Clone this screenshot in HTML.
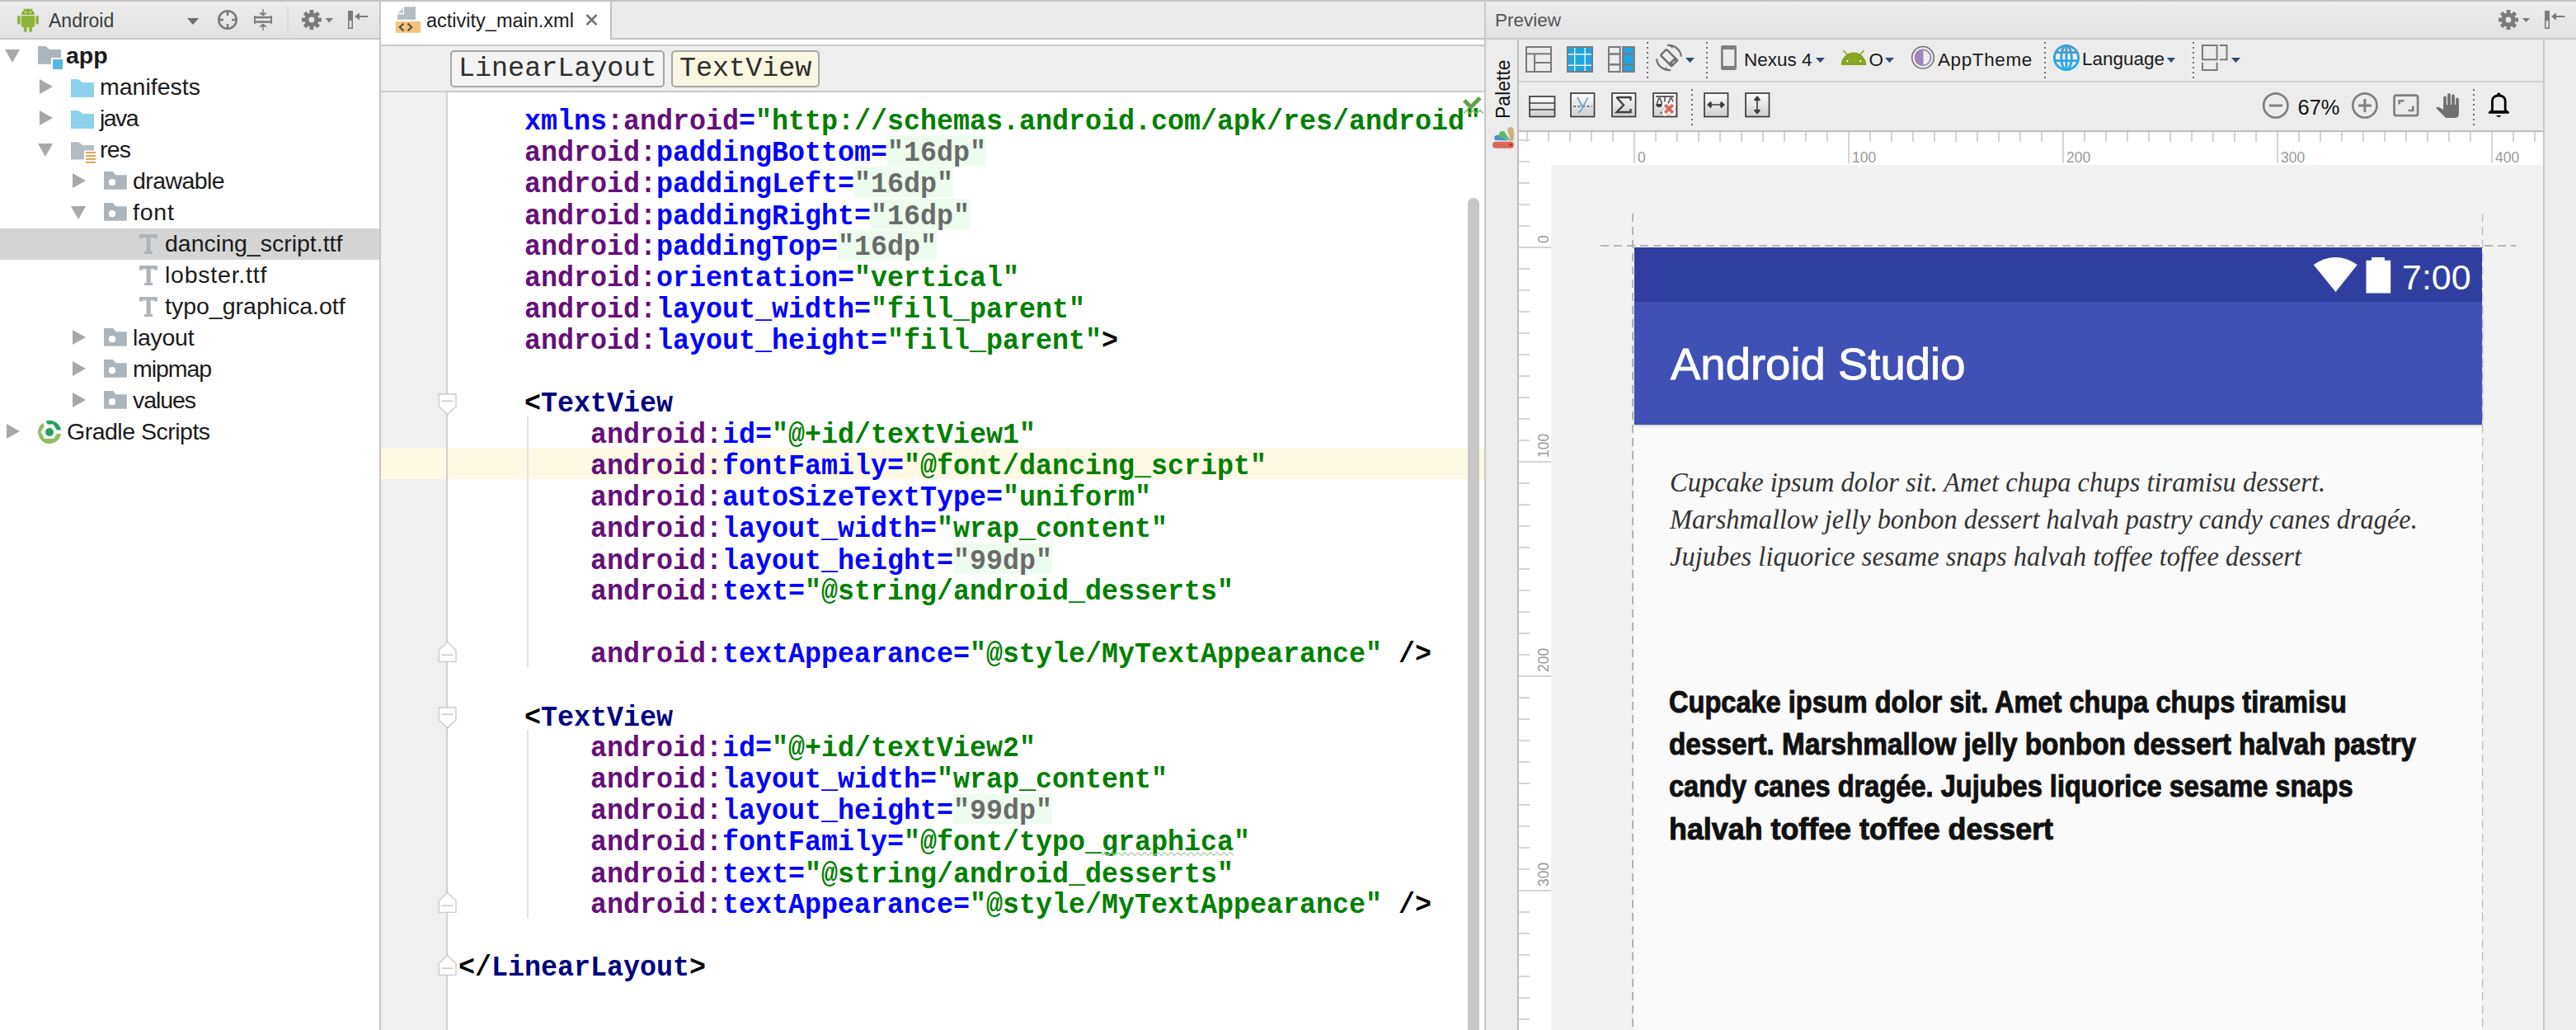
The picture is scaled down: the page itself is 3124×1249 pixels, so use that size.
<!DOCTYPE html>
<html><head><meta charset="utf-8">
<style>
*{margin:0;padding:0;box-sizing:border-box}
html,body{width:3124px;height:1249px;overflow:hidden;background:#fff;position:relative;font-family:"Liberation Sans",sans-serif}
.a{position:absolute}
.hdr{background:linear-gradient(#ececec,#e2e2e2)}
.code{position:absolute;left:556px;top:129px;transform:scaleY(1.08);transform-origin:0 0;font-family:"Liberation Mono",monospace;font-weight:bold;font-size:33.33px;line-height:35.185px;white-space:pre;color:#000}
.n{color:#660e7a}.at{color:#0000ff}.v{color:#008000}.t{color:#000080}.fold{color:#6b6b6b;background:linear-gradient(#edfcee,#edfcee) no-repeat 0 0/100% 34.3px}
.tree{position:absolute;left:0;margin-top:-1px;font-size:28.5px;color:#1b1b1b;white-space:nowrap}
.ruler{background:#fff}
.scr{font-family:"Liberation Serif",serif;font-style:italic;font-size:34px;line-height:44px;color:#333;white-space:nowrap;transform-origin:0 0}
.bt{font-weight:bold;font-size:37px;line-height:44px;color:#111;-webkit-text-stroke:1px #111;white-space:nowrap;transform-origin:0 0}
.rl{font-size:17.5px;line-height:20px;color:#999;white-space:nowrap}
.rot{transform-origin:0 0;transform:rotate(-90deg)}
.tb{font-size:22.5px;line-height:30px;color:#1a1a1a;white-space:nowrap}
</style></head><body>
<!-- top border -->
<div class="a" style="left:0;top:0;width:3124px;height:2px;background:#c4c4c4"></div>

<!-- ============ PROJECT PANEL ============ -->
<div class="a hdr" style="left:0;top:2px;width:460px;height:44px"></div>
<div class="a" style="left:0;top:46px;width:460px;height:2px;background:#c9c9c9"></div>
<div class="a" style="left:460px;top:0;width:2px;height:1249px;background:#c6c6c6"></div>
<!-- selected row -->
<div class="a" style="left:0;top:277px;width:460px;height:38px;background:#d5d5d5"></div>


<!-- header content -->
<svg class="a" style="left:0;top:0" width="460" height="47" viewBox="0 0 460 47">
 <g fill="#8db33b">
  <path d="M25.8 18 A8.15 7.6 0 0 1 42.1 18 Z"/>
  <rect x="25.8" y="19.1" width="16.3" height="12" />
  <path d="M25.8 30 H42.1 V31 Q42.1 33 40 33 H27.8 Q25.8 33 25.8 31 Z"/>
  <rect x="21" y="18.9" width="3.7" height="10.9" rx="1.85"/>
  <rect x="43.3" y="18.9" width="3.7" height="10.9" rx="1.85"/>
  <rect x="28.9" y="30" width="3.9" height="9" rx="1.9"/>
  <rect x="35.1" y="30" width="3.9" height="9" rx="1.9"/>
  <path d="M28.3 9.3 L30.3 12" stroke="#8db33b" stroke-width="1"/>
  <path d="M39.6 9.3 L37.6 12" stroke="#8db33b" stroke-width="1"/>
 </g>
 <rect x="30.3" y="14" width="1.8" height="1.8" fill="#e6e6e6"/>
 <rect x="36.3" y="14" width="1.8" height="1.8" fill="#e6e6e6"/>
 <path d="M227 22 H241 L234 30 Z" fill="#6e6e6e"/>
 <circle cx="276" cy="24" r="10.7" fill="none" stroke="#7b7b7b" stroke-width="2.6"/>
 <rect x="274.7" y="12" width="2.6" height="7" fill="#7b7b7b"/>
 <rect x="274.7" y="29" width="2.6" height="7" fill="#7b7b7b"/>
 <rect x="264" y="22.7" width="7" height="2.6" fill="#7b7b7b"/>
 <rect x="281" y="22.7" width="7" height="2.6" fill="#7b7b7b"/>
 <g fill="#7b7b7b">
  <rect x="308" y="19.8" width="22" height="2.5"/><rect x="308" y="25.3" width="22" height="2.5"/>
  <rect x="308" y="19" width="1.8" height="9.8"/><rect x="328.2" y="19" width="1.8" height="9.8"/>
  <rect x="318.3" y="11" width="1.4" height="6"/><path d="M314 15.5 H324 L319 19.5Z"/>
  <rect x="318.3" y="31" width="1.4" height="6"/><path d="M314 32.5 H324 L319 28.5Z"/>
 </g>
 <rect x="348.5" y="7" width="1.2" height="33" fill="#d2d2d2"/>
 <g fill="#7b7b7b"><circle cx="377.9" cy="24" r="8.6"/><rect x="375.5" y="12.0" width="4.8" height="6" transform="rotate(0 377.9 24)"/><rect x="375.5" y="12.0" width="4.8" height="6" transform="rotate(45 377.9 24)"/><rect x="375.5" y="12.0" width="4.8" height="6" transform="rotate(90 377.9 24)"/><rect x="375.5" y="12.0" width="4.8" height="6" transform="rotate(135 377.9 24)"/><rect x="375.5" y="12.0" width="4.8" height="6" transform="rotate(180 377.9 24)"/><rect x="375.5" y="12.0" width="4.8" height="6" transform="rotate(225 377.9 24)"/><rect x="375.5" y="12.0" width="4.8" height="6" transform="rotate(270 377.9 24)"/><rect x="375.5" y="12.0" width="4.8" height="6" transform="rotate(315 377.9 24)"/></g><circle cx="377.9" cy="24" r="3.4" fill="#e6e6e6"/>
 <path d="M394.5 22 H404 L399.2 27.5Z" fill="#7b7b7b"/>
 <rect x="422" y="13" width="6" height="22" fill="#7b7b7b"/>
 <rect x="423.6" y="25" width="2.8" height="8.5" fill="#e6e6e6"/>
 <path d="M430 20 L436 15.5 V18.9 H446 V21.1 H436 V24.5Z" fill="#7b7b7b"/>
</svg>
<div class="a" style="left:59px;top:10px;font-size:23px;line-height:30px;color:#3c3c3c">Android</div>

<!-- tree icons -->
<svg class="a" style="left:0;top:49px" width="460" height="500" viewBox="0 49 460 500">
 <g fill="#a8a8a8">
  <path d="M6 60 H24 L15 76Z"/>
  <path d="M48 96 V114 L64 105Z"/>
  <path d="M48 134 V152 L64 143Z"/>
  <path d="M46 174 H64 L55 190Z"/>
  <path d="M88 210 V228 L104 219Z"/>
  <path d="M86 250 H104 L95 266Z"/>
  <path d="M88 400 V418 L104 409Z"/>
  <path d="M88 438 V456 L104 447Z"/>
  <path d="M88 476 V494 L104 485Z"/>
  <path d="M8 514 V532 L24 523Z"/>
 </g>
 <!-- app folder -->
 <path d="M46 56 H55.3 L60.2 60.1 H74 V70 H62 V77.7 H46Z" fill="#adb5bc"/>
 <rect x="64" y="72" width="12" height="12" fill="#57b9e0"/>
 <!-- manifests, java -->
 <path d="M86 96 H95 L100 100 H114 V118 H86Z" fill="#8fd1ea"/>
 <path d="M86 134 H95 L100 138 H114 V156 H86Z" fill="#8fd1ea"/>
 <!-- res -->
 <path d="M86 172.2 H95 L100.4 176 H113.8 V182.5 H102 V193.5 H86Z" fill="#b4bcc3"/>
 <g fill="#d99a35"><rect x="104" y="184.2" width="12" height="1.7"/><rect x="104" y="188.2" width="12" height="1.7"/><rect x="104" y="192.1" width="12" height="1.7"/><rect x="104" y="196" width="12" height="1.7"/></g>
 <!-- gray folders with circle -->
 <g fill="#adb5bc">
  <path d="M126 208 H137 L140.6 212.2 H153.8 V229.7 H126Z"/>
  <path d="M126 246 H137 L140.6 250.2 H153.8 V267.7 H126Z"/>
  <path d="M126 398 H137 L140.6 402.2 H153.8 V419.7 H126Z"/>
  <path d="M126 436 H137 L140.6 440.2 H153.8 V457.7 H126Z"/>
  <path d="M126 474 H137 L140.6 478.2 H153.8 V495.7 H126Z"/>
 </g>
 <g fill="#fff">
  <circle cx="136" cy="221.2" r="4.1"/><circle cx="136" cy="259.2" r="4.1"/><circle cx="136" cy="411.2" r="4.1"/><circle cx="136" cy="449.2" r="4.1"/><circle cx="136" cy="487.2" r="4.1"/>
 </g>
 <!-- T icons -->
 <g fill="#adb5bc">
  <path d="M169 284 H191 V289.6 H187 V288.2 H182.7 V305 H185 V308 H175 V305 H177.5 V288.2 H173 V289.6 H169Z"/>
  <path d="M169 322 H191 V327.6 H187 V326.2 H182.7 V343 H185 V346 H175 V343 H177.5 V326.2 H173 V327.6 H169Z"/>
  <path d="M169 360 H191 V365.6 H187 V364.2 H182.7 V381 H185 V384 H175 V381 H177.5 V364.2 H173 V365.6 H169Z"/>
 </g>
 <!-- gradle -->
 <path d="M56 510.5 A14 14 0 0 1 74 521.5 L69 521.5 L64.5 514.5 L57.5 514.5Z" fill="#21a05a"/>
 <path d="M51.5 513 L54 516 L49.5 524 L54 532 L65 532 L69 526 L74 526 A14 14 0 1 1 51.5 513Z" fill="#8fbf5f"/>
 <circle cx="60" cy="524" r="4.9" fill="#21a05a"/>
</svg>
<div class="tree" style="top:49px;left:80px;font-weight:bold;line-height:38px">app</div>
<div class="tree" style="top:87px;left:121px;line-height:38px">manifests</div>
<div class="tree" style="top:125px;left:121px;line-height:38px;letter-spacing:-1.6px">java</div>
<div class="tree" style="top:163px;left:121px;line-height:38px;letter-spacing:-0.8px">res</div>
<div class="tree" style="top:201px;left:161px;line-height:38px;letter-spacing:-0.57px">drawable</div>
<div class="tree" style="top:239px;left:161px;line-height:38px;letter-spacing:0.77px">font</div>
<div class="tree" style="top:277px;left:200px;line-height:38px">dancing_script.ttf</div>
<div class="tree" style="top:315px;left:200px;line-height:38px;letter-spacing:0.77px">lobster.ttf</div>
<div class="tree" style="top:353px;left:200px;line-height:38px">typo_graphica.otf</div>
<div class="tree" style="top:391px;left:161px;line-height:38px;letter-spacing:-0.3px">layout</div>
<div class="tree" style="top:429px;left:161px;line-height:38px;letter-spacing:-1.04px">mipmap</div>
<div class="tree" style="top:467px;left:161px;line-height:38px;letter-spacing:-1.1px">values</div>
<div class="tree" style="top:505px;left:81px;line-height:38px;letter-spacing:-0.5px">Gradle Scripts</div>

<!-- ============ EDITOR ============ -->
<div class="a" style="left:742px;top:2px;width:1058px;height:44px;background:#ebebeb"></div>
<div class="a" style="left:740px;top:2px;width:2px;height:46px;background:#c0c0c0"></div>
<div class="a" style="left:742px;top:46px;width:1058px;height:2px;background:#c0c0c0"></div>
<div class="a" style="left:462px;top:54px;width:1338px;height:2px;background:#c8c8c8"></div>
<div class="a" style="left:462px;top:56px;width:1338px;height:54px;background:#efefef"></div>
<div class="a" style="left:462px;top:110px;width:1338px;height:2px;background:#cdcdcd"></div>
<!-- gutter -->
<div class="a" style="left:462px;top:112px;width:79px;height:1137px;background:#f0f0f0"></div>
<!-- caret row -->
<div class="a" style="left:462px;top:543px;width:1338px;height:38px;background:#fdf9e5"></div>
<div class="a" style="left:541px;top:112px;width:2px;height:1137px;background:#d0d0d0"></div>
<div class="a" style="left:1800px;top:0;width:2px;height:1249px;background:#c9c9c9"></div>

<div class="code">    <span class="at">xmlns</span><span class="n">:android</span><span class="at">=</span><span class="v">"http://schemas.android.com/apk/res/android"</span>
    <span class="n">android:</span><span class="at">paddingBottom=</span><span class="fold">"16dp"</span>
    <span class="n">android:</span><span class="at">paddingLeft=</span><span class="fold">"16dp"</span>
    <span class="n">android:</span><span class="at">paddingRight=</span><span class="fold">"16dp"</span>
    <span class="n">android:</span><span class="at">paddingTop=</span><span class="fold">"16dp"</span>
    <span class="n">android:</span><span class="at">orientation=</span><span class="v">"vertical"</span>
    <span class="n">android:</span><span class="at">layout_width=</span><span class="v">"fill_parent"</span>
    <span class="n">android:</span><span class="at">layout_height=</span><span class="v">"fill_parent"</span>&gt;

    &lt;<span class="t">TextView</span>
        <span class="n">android:</span><span class="at">id=</span><span class="v">"@+id/textView1"</span>
        <span class="n">android:</span><span class="at">fontFamily=</span><span class="v">"@font/dancing_script"</span>
        <span class="n">android:</span><span class="at">autoSizeTextType=</span><span class="v">"uniform"</span>
        <span class="n">android:</span><span class="at">layout_width=</span><span class="v">"wrap_content"</span>
        <span class="n">android:</span><span class="at">layout_height=</span><span class="fold">"99dp"</span>
        <span class="n">android:</span><span class="at">text=</span><span class="v">"@string/android_desserts"</span>

        <span class="n">android:</span><span class="at">textAppearance=</span><span class="v">"@style/MyTextAppearance"</span> /&gt;

    &lt;<span class="t">TextView</span>
        <span class="n">android:</span><span class="at">id=</span><span class="v">"@+id/textView2"</span>
        <span class="n">android:</span><span class="at">layout_width=</span><span class="v">"wrap_content"</span>
        <span class="n">android:</span><span class="at">layout_height=</span><span class="fold">"99dp"</span>
        <span class="n">android:</span><span class="at">fontFamily=</span><span class="v">"@font/typo_graphica"</span>
        <span class="n">android:</span><span class="at">text=</span><span class="v">"@string/android_desserts"</span>
        <span class="n">android:</span><span class="at">textAppearance=</span><span class="v">"@style/MyTextAppearance"</span> /&gt;

&lt;/<span class="t">LinearLayout</span>&gt;</div>


<!-- tab content -->
<svg class="a" style="left:462px;top:0" width="340" height="54" viewBox="462 0 340 54">
 <path d="M490 8.2 H504 V23.7 H482 V17.5 H490Z" fill="#b3bcc4"/>
 <path d="M482.5 16 L489 9.2 V16Z" fill="#c3cad0"/>
 <rect x="480" y="26" width="30" height="13.7" fill="#f4c27d"/>
 <path d="M489.5 28.5 L484.8 33 L489.5 37.5 M494.5 28.5 L499.2 33 L494.5 37.5" fill="none" stroke="#5b5040" stroke-width="2.2"/>
 <path d="M711.5 18 L723.5 30 M723.5 18 L711.5 30" stroke="#757575" stroke-width="2.6"/>
</svg>
<div class="a" style="left:517px;top:9.5px;font-size:23.5px;line-height:30px;color:#1c1c1c">activity_main.xml</div>
<!-- breadcrumbs -->
<div class="a" style="left:546px;top:60.5px;width:260px;height:45px;border:2px solid #a6a6a6;border-radius:5px;background:#f4f4f4"></div>
<div class="a" style="left:814px;top:60.5px;width:180px;height:45px;border:2px solid #a6a6a6;border-radius:5px;background:#f9f6e1"></div>
<div class="a" style="left:556px;top:63px;font-family:'Liberation Mono',monospace;font-size:33.4px;line-height:40px;color:#2e2e2e">LinearLayout</div>
<div class="a" style="left:824px;top:63px;font-family:'Liberation Mono',monospace;font-size:33.4px;line-height:40px;color:#2e2e2e">TextView</div>
<!-- indent guides -->
<div class="a" style="left:639px;top:505px;width:1.5px;height:304px;background:#e2e2e2"></div>
<div class="a" style="left:639px;top:885px;width:1.5px;height:228px;background:#e2e2e2"></div>
<!-- fold markers -->
<svg class="a" style="left:520px;top:112px" width="50" height="1137" viewBox="520 112 50 1137">
 <g fill="#fff" stroke="#c9c9c9" stroke-width="1.3">
  <path d="M532.3 478 H553 V493 L542.6 502.5 L532.3 493Z"/>
  <path d="M532.3 858 H553 V873 L542.6 882.5 L532.3 873Z"/>
  <path d="M532.3 802.4 H553 V788.5 L542.6 778.3 L532.3 788.5Z"/>
  <path d="M532.3 1106.4 H553 V1092.5 L542.6 1082.3 L532.3 1092.5Z"/>
  <path d="M532.3 1182.4 H553 V1168.5 L542.6 1158.3 L532.3 1168.5Z"/>
 </g>
 <g fill="#cbcbcb">
  <rect x="535.5" y="485.5" width="14" height="1.6"/>
  <rect x="535.5" y="865.5" width="14" height="1.6"/>
  <rect x="535.5" y="793.4" width="14" height="1.6"/>
  <rect x="535.5" y="1097.4" width="14" height="1.6"/>
  <rect x="535.5" y="1173.4" width="14" height="1.6"/>
 </g>
</svg>
<svg class="a" style="left:1330px;top:1028px" width="170" height="14" viewBox="1330 1028 170 14"><path d="M1336.3 1037.4 L1340.3 1033.6 L1344.3 1037.4 L1348.3 1033.6 L1352.3 1037.4 L1356.3 1033.6 L1360.3 1037.4 L1364.3 1033.6 L1368.3 1037.4 L1372.3 1033.6 L1376.3 1037.4 L1380.3 1033.6 L1384.3 1037.4 L1388.3 1033.6 L1392.3 1037.4 L1396.3 1033.6 L1400.3 1037.4 L1404.3 1033.6 L1408.3 1037.4 L1412.3 1033.6 L1416.3 1037.4 L1420.3 1033.6 L1424.3 1037.4 L1428.3 1033.6 L1432.3 1037.4 L1436.3 1033.6 L1440.3 1037.4 L1444.3 1033.6 L1448.3 1037.4 L1452.3 1033.6 L1456.3 1037.4 L1460.3 1033.6 L1464.3 1037.4 L1468.3 1033.6 L1472.3 1037.4 L1476.3 1033.6 L1480.3 1037.4 L1484.3 1033.6 L1488.3 1037.4 L1492.3 1033.6 L1496.3 1037.4" fill="none" stroke="#a9cfa2" stroke-width="1.2"/></svg>
<svg class="a" style="left:1770px;top:128px" width="30" height="14" viewBox="1770 128 30 14"><path d="M1775 137.5 L1779.0 133.7 L1783.0 137.5 L1787.0 133.7 L1791.0 137.5 L1795.0 133.7 L1799.0 137.5" fill="none" stroke="#7fb56f" stroke-width="1.3"/></svg>
<!-- check mark -->
<svg class="a" style="left:1765px;top:110px" width="35" height="30" viewBox="1765 110 35 30">
 <path d="M1775.8 121.8 L1783.8 129.8 L1794.8 118.8" fill="none" stroke="#62a04f" stroke-width="5" stroke-linecap="butt"/>
</svg>
<!-- scrollbar -->
<div class="a" style="left:1780px;top:240px;width:14px;height:1010px;border-radius:7px 7px 0 0;background:#c7c7c7"></div>

<!-- ============ PREVIEW ============ -->
<div class="a hdr" style="left:1802px;top:2px;width:1322px;height:45px"></div>
<div class="a" style="left:1802px;top:46px;width:1322px;height:2px;background:#c9c9c9"></div>
<div class="a" style="left:1802px;top:48px;width:38px;height:1201px;background:#ececec"></div>
<div class="a" style="left:1840px;top:48px;width:2px;height:1201px;background:#bdbdbd"></div>
<div class="a" style="left:1842px;top:48px;width:1242px;height:111px;background:#ececec"></div>
<div class="a" style="left:1842px;top:98px;width:1242px;height:2px;background:#cfcfcf"></div>
<div class="a" style="left:1842px;top:158px;width:1242px;height:2px;background:#bcbcbc"></div>
<div class="a" style="left:3084px;top:48px;width:2px;height:1201px;background:#c9c9c9"></div>
<div class="a" style="left:3086px;top:48px;width:38px;height:1201px;background:#ececec"></div>

<div class="a" style="left:1813px;top:10px;font-size:22.5px;line-height:30px;color:#555">Preview</div>
<svg class="a" style="left:3020px;top:0" width="104" height="47" viewBox="3020 0 104 47">
 <g fill="#7b7b7b">
  
  <path d="M3059 22 H3068 L3063.5 27Z"/>
  <rect x="3086" y="13" width="6" height="22"/>
  <path d="M3094 20 L3100 15.5 V18.9 H3110.5 V21.1 H3100 V24.5Z"/>
 </g>
 <g fill="#7b7b7b"><circle cx="3042" cy="24" r="8.6"/><rect x="3039.6" y="12.0" width="4.8" height="6" transform="rotate(0 3042 24)"/><rect x="3039.6" y="12.0" width="4.8" height="6" transform="rotate(45 3042 24)"/><rect x="3039.6" y="12.0" width="4.8" height="6" transform="rotate(90 3042 24)"/><rect x="3039.6" y="12.0" width="4.8" height="6" transform="rotate(135 3042 24)"/><rect x="3039.6" y="12.0" width="4.8" height="6" transform="rotate(180 3042 24)"/><rect x="3039.6" y="12.0" width="4.8" height="6" transform="rotate(225 3042 24)"/><rect x="3039.6" y="12.0" width="4.8" height="6" transform="rotate(270 3042 24)"/><rect x="3039.6" y="12.0" width="4.8" height="6" transform="rotate(315 3042 24)"/></g><circle cx="3042" cy="24" r="3.4" fill="#e6e6e6"/>
 <rect x="3087.6" y="25" width="2.8" height="8.5" fill="#e6e6e6"/>
</svg>
<!-- palette strip -->
<div class="a" style="left:1814px;top:144px;width:72px;height:18px;transform-origin:0 0;transform:rotate(-90deg);font-size:23px;line-height:18px;color:#111;white-space:nowrap">Palette</div>
<svg class="a" style="left:1805px;top:150px" width="35" height="35" viewBox="1805 150 35 35">
 <path d="M1813 170 Q1810 164 1817 163.5 L1829 170.5Z" fill="#4e91c6"/>
 <path d="M1818 165 Q1817 158 1824 159 L1832 171Z" fill="#5cb86a"/>
 <path d="M1828 157 Q1830 152 1835 155 Q1837 162 1835 171 L1832 171Z" fill="#cfae80"/>
 <rect x="1810" y="171.7" width="26" height="8" rx="4" fill="#d9685a"/>
 <circle cx="1832" cy="175.6" r="1.9" fill="#b8352e"/>
</svg>
<!-- toolbar row 1 -->
<svg class="a" style="left:1843px;top:48px" width="1241" height="112" viewBox="1843 48 1241 112">
 <defs><linearGradient id="bg1" x1="0" y1="0" x2="0" y2="1"><stop offset="0" stop-color="#fff"/><stop offset="1" stop-color="#cdcdcd"/></linearGradient>
 <linearGradient id="gl" gradientUnits="userSpaceOnUse" x1="0" y1="54" x2="0" y2="86"><stop offset="0" stop-color="#4b9bc8"/><stop offset="1" stop-color="#1eaaf0"/></linearGradient></defs>
 <g fill="none" stroke="#7a7a7a" stroke-width="2">
  <rect x="1851" y="57" width="30" height="30"/>
  <path d="M1851 65.3 H1881 M1861 65.3 V87 M1861 76 H1881"/>
 </g>
 <rect x="1901" y="57" width="30" height="30" fill="#1ea7e6" stroke="#7a7a7a" stroke-width="2"/>
 <path d="M1909.7 58 V86 M1922.2 58 V86 M1902 65.8 H1930 M1902 79.3 H1930" stroke="#f4f4f4" stroke-width="1.4"/>
 <rect x="1951" y="57" width="13.7" height="30" fill="none" stroke="#7a7a7a" stroke-width="2"/>
 <rect x="1968.1" y="57" width="13.7" height="30" fill="#1ea7e6" stroke="#7a7a7a" stroke-width="2"/>
 <path d="M1951 65.5 H1964.7 M1951 78.3 H1964.7 M1968.1 65.5 H1981.8 M1968.1 78.3 H1981.8" stroke="#7a7a7a" stroke-width="2.4"/>
 <g fill="#6e6e6e"><rect x="1997" y="51" width="2" height="2"/><rect x="1997" y="57" width="2" height="2"/><rect x="1997" y="63" width="2" height="2"/><rect x="1997" y="69" width="2" height="2"/><rect x="1997" y="75" width="2" height="2"/><rect x="1997" y="81" width="2" height="2"/><rect x="1997" y="87" width="2" height="2"/><rect x="1997" y="93" width="2" height="2"/><rect x="2069" y="51" width="2" height="2"/><rect x="2069" y="57" width="2" height="2"/><rect x="2069" y="63" width="2" height="2"/><rect x="2069" y="69" width="2" height="2"/><rect x="2069" y="75" width="2" height="2"/><rect x="2069" y="81" width="2" height="2"/><rect x="2069" y="87" width="2" height="2"/><rect x="2069" y="93" width="2" height="2"/><rect x="2479" y="51" width="2" height="2"/><rect x="2479" y="57" width="2" height="2"/><rect x="2479" y="63" width="2" height="2"/><rect x="2479" y="69" width="2" height="2"/><rect x="2479" y="75" width="2" height="2"/><rect x="2479" y="81" width="2" height="2"/><rect x="2479" y="87" width="2" height="2"/><rect x="2479" y="93" width="2" height="2"/><rect x="2659" y="51" width="2" height="2"/><rect x="2659" y="57" width="2" height="2"/><rect x="2659" y="63" width="2" height="2"/><rect x="2659" y="69" width="2" height="2"/><rect x="2659" y="75" width="2" height="2"/><rect x="2659" y="81" width="2" height="2"/><rect x="2659" y="87" width="2" height="2"/><rect x="2659" y="93" width="2" height="2"/></g>
 <!-- rotate -->
 <g transform="rotate(-45 2024 70)">
  <rect x="2018.95" y="60.6" width="10.1" height="18.6" rx="1.6" fill="none" stroke="#707070" stroke-width="2.5"/>
  <rect x="2017.7" y="74.6" width="12.6" height="6" rx="1.6" fill="#707070"/>
  <rect x="2022" y="77.2" width="4" height="1.2" fill="#d8d8d8"/>
 </g>
 <path d="M2022 55.1 A15 15 0 0 1 2038.9 68.7 M2009.06 71.3 A15 15 0 0 0 2026 84.9" fill="none" stroke="#707070" stroke-width="2.2"/>
 <path d="M2023.2 54.2 L2029.5 55.3 L2028.2 59Z M2024.8 85.8 L2018.5 84.7 L2019.8 81Z" fill="#707070"/>
 <g fill="#2e4a6e">
  <path d="M2044 70 H2055 L2049.5 76Z"/><path d="M2202 70 H2213 L2207.5 76Z"/><path d="M2286 70 H2297 L2291.5 76Z"/>
  <path d="M2628 70 H2638 L2633 76Z"/><path d="M2706 70 H2717 L2711.5 76Z"/>
 </g>
 <!-- phone -->
 <rect x="2087" y="55" width="19" height="30" rx="2.5" fill="#7d7e82"/>
 <rect x="2089.7" y="60" width="13.6" height="19.9" fill="#ececec"/>
 <!-- android head -->
 <path d="M2232.8 78.9 A15.2 15.3 0 0 1 2263.2 78.9Z" fill="#86a624"/>
 <path d="M2236 61.7 L2240 66 M2260 61.7 L2256 66" stroke="#86a624" stroke-width="1.6" stroke-linecap="round"/>
 <rect x="2239.3" y="73.2" width="2" height="2" fill="#fff"/><rect x="2255.3" y="73.2" width="2" height="2" fill="#fff"/>
 <!-- theme -->
 <circle cx="2332" cy="69.8" r="13.3" fill="none" stroke="#727272" stroke-width="1.5"/>
 <circle cx="2332" cy="69.8" r="9.5" fill="none" stroke="#9277b5" stroke-width="1.6"/>
 <path d="M2332.5 60.3 A9.5 9.5 0 0 0 2332.5 79.3Z" fill="#a283c0"/>
 <!-- globe -->
 <g fill="none" stroke="url(#gl)" stroke-width="2.9">
  <circle cx="2506" cy="70" r="14.6"/>
  <ellipse cx="2506" cy="70" rx="6.3" ry="14.6"/>
  <path d="M2506 55.2 V84.8 M2492 63.6 H2520 M2492 73.6 H2520"/>
 </g>
 <!-- layout icon -->
 <g fill="none" stroke="#7a7a7a" stroke-width="2">
  <rect x="2671" y="55" width="17.6" height="17.2"/>
  <path d="M2691.7 55 H2700.5 V72.2 H2691.7 M2671 75.7 V85 H2688.6 V75.7"/>
 </g>
 <!-- row 2 icons -->
 <g stroke="#3c3c3c" stroke-width="1.7" fill="url(#bg1)">
  <rect x="1855" y="117" width="30.5" height="24.5"/>
  <rect x="1905" y="113" width="28.5" height="28.5"/>
  <rect x="1955" y="113" width="28.5" height="28.5"/>
  <rect x="2005" y="113" width="28.5" height="28.5"/>
  <rect x="2067" y="113" width="28.5" height="28.5"/>
  <rect x="2117" y="113" width="28.5" height="28.5"/>
 </g>
 <path d="M1855 125 H1885.5 M1855 133 H1885.5" stroke="#3c3c3c" stroke-width="1.7"/>
 <path d="M1908 129 H1931" stroke="#555" stroke-width="1.3" stroke-dasharray="3 2.5"/>
 <path d="M1913 118 L1919.5 130 Q1917 135.5 1914 136.5 M1925.8 118 L1919.5 130" fill="none" stroke="#5a9fd0" stroke-width="1.6"/>
 <path d="M1960.5 118 H1977.5 V122 M1960.5 118 L1969 127.5 L1960.5 136 H1977.5 V132" fill="none" stroke="#3c3c3c" stroke-width="2.3"/>
 <path d="M2008.1 117 H2029.9" stroke="#3c3c3c" stroke-width="1.6"/>
 <path d="M2019 117 V123.7" stroke="#3c3c3c" stroke-width="1.4"/>
 <path d="M2012 118.5 L2009.3 126 M2013 118.5 L2015.7 126 M2026 118.5 L2023 125.5 M2027 118.5 L2029 124" fill="none" stroke="#3c3c3c" stroke-width="1.3"/>
 <path d="M2008.2 126 H2016 A3.9 3.9 0 0 1 2008.2 126Z" fill="#3c3c3c"/>
 <path d="M2012.5 137.8 L2016 135 V137.8Z" fill="#3c3c3c"/>
 <path d="M2019.2 127.2 L2028.8 136.8 M2028.8 127.2 L2019.2 136.8" stroke="#fff" stroke-width="6.8" stroke-linecap="round"/>
 <path d="M2019.2 127.2 L2028.8 136.8 M2028.8 127.2 L2019.2 136.8" stroke="#e0675a" stroke-width="3.9"/>
 <path d="M2073 127 H2089 M2075 124 V130 M2087 124 V130" stroke="#3c3c3c" stroke-width="1.6"/>
 <path d="M2070 127 L2075 122.5 V131.5Z M2092 127 L2087 122.5 V131.5Z" fill="#3c3c3c"/>
 <path d="M2131 120 V135 M2128 121.5 H2134 M2128 133.5 H2134" stroke="#3c3c3c" stroke-width="1.6"/>
 <path d="M2131 116 L2126.5 121.5 H2135.5Z M2131 138.5 L2126.5 133.5 H2135.5Z" fill="#3c3c3c"/>
 <g fill="#6e6e6e"><rect x="2051" y="108" width="2" height="2"/><rect x="2051" y="114" width="2" height="2"/><rect x="2051" y="120" width="2" height="2"/><rect x="2051" y="126" width="2" height="2"/><rect x="2051" y="132" width="2" height="2"/><rect x="2051" y="138" width="2" height="2"/><rect x="2051" y="144" width="2" height="2"/><rect x="2051" y="150" width="2" height="2"/><rect x="2999" y="108" width="2" height="2"/><rect x="2999" y="114" width="2" height="2"/><rect x="2999" y="120" width="2" height="2"/><rect x="2999" y="126" width="2" height="2"/><rect x="2999" y="132" width="2" height="2"/><rect x="2999" y="138" width="2" height="2"/><rect x="2999" y="144" width="2" height="2"/><rect x="2999" y="150" width="2" height="2"/></g>
 <!-- zoom -->
 <g fill="none" stroke="#808080" stroke-width="2.7">
  <circle cx="2759.8" cy="127.9" r="14.6"/>
  <circle cx="2867.9" cy="127.9" r="14.6"/>
  <rect x="2903.6" y="115.6" width="28.5" height="24.6" rx="2.5"/>
 </g>
 <path d="M2752 127.9 H2768 M2860 127.9 H2876 M2867.9 120 V136" stroke="#808080" stroke-width="3"/>
 <path d="M2909.7 126.5 V122.2 H2915.5 M2926.3 128.5 V134 H2920.5" fill="none" stroke="#808080" stroke-width="2.6"/>
 <!-- hand -->
 <g fill="#707070">
  <rect x="2963.2" y="116.4" width="3.7" height="20" rx="1.85"/>
  <rect x="2968.2" y="112.9" width="3.7" height="20" rx="1.85"/>
  <rect x="2973.2" y="114.3" width="3.7" height="20" rx="1.85"/>
  <rect x="2978.2" y="118.6" width="3.7" height="20" rx="1.85"/>
  <path d="M2963.2 127 H2981.9 V138 Q2981.9 142.9 2977 142.9 H2966 L2954.3 131 Q2955.5 129 2958 130 L2963.2 133Z"/>
 </g>
 <!-- bell -->
 <path d="M3020.5 135.5 L3022.5 133.5 V122.5 Q3022.5 116 3030.3 115.8 Q3038.2 116 3038.2 122.5 V133.5 L3040.2 135.5Z" fill="none" stroke="#000" stroke-width="2.8" stroke-linejoin="round"/>
 <path d="M3017.9 136.5 H3042.9" stroke="#000" stroke-width="2.5"/>
 <circle cx="3030.3" cy="114.6" r="2.2"/>
 <path d="M3027 140 H3033.5 Q3030.3 144 3027 140Z"/>
</svg>
<div class="a tb" style="left:2115px;top:58px">Nexus 4</div>
<div class="a tb" style="left:2266.5px;top:58px">O</div>
<div class="a tb" style="left:2350px;top:58px;letter-spacing:0.6px">AppTheme</div>
<div class="a tb" style="left:2525px;top:57px">Language</div>
<div class="a" style="left:2786.5px;top:115px;font-size:25.5px;line-height:30px;color:#111">67%</div>

<!-- rulers -->
<div class="a" style="left:1842px;top:160px;width:1242px;height:40px;background:#fff"></div>
<div class="a" style="left:1842px;top:200px;width:40px;height:1049px;background:#fff"></div>
<svg class="a" style="left:1842px;top:158px" width="1242" height="1091" viewBox="1842 158 1242 1091">
 <g fill="#d4d4d4"><rect x="1851" y="160" width="2" height="12"/><rect x="1877" y="160" width="2" height="12"/><rect x="1842" y="169" width="13" height="2"/><rect x="1842" y="195" width="13" height="2"/><rect x="1903" y="160" width="2" height="12"/><rect x="1929" y="160" width="2" height="12"/><rect x="1955" y="160" width="2" height="12"/><rect x="1981" y="160" width="2" height="38"/><rect x="2007" y="160" width="2" height="12"/><rect x="2033" y="160" width="2" height="12"/><rect x="2059" y="160" width="2" height="12"/><rect x="2085" y="160" width="2" height="12"/><rect x="2111" y="160" width="2" height="12"/><rect x="2137" y="160" width="2" height="12"/><rect x="2163" y="160" width="2" height="12"/><rect x="2189" y="160" width="2" height="12"/><rect x="2215" y="160" width="2" height="12"/><rect x="2241" y="160" width="2" height="38"/><rect x="2267" y="160" width="2" height="12"/><rect x="2293" y="160" width="2" height="12"/><rect x="2319" y="160" width="2" height="12"/><rect x="2345" y="160" width="2" height="12"/><rect x="2371" y="160" width="2" height="12"/><rect x="2397" y="160" width="2" height="12"/><rect x="2423" y="160" width="2" height="12"/><rect x="2449" y="160" width="2" height="12"/><rect x="2475" y="160" width="2" height="12"/><rect x="2501" y="160" width="2" height="38"/><rect x="2527" y="160" width="2" height="12"/><rect x="2553" y="160" width="2" height="12"/><rect x="2579" y="160" width="2" height="12"/><rect x="2605" y="160" width="2" height="12"/><rect x="2631" y="160" width="2" height="12"/><rect x="2657" y="160" width="2" height="12"/><rect x="2683" y="160" width="2" height="12"/><rect x="2709" y="160" width="2" height="12"/><rect x="2735" y="160" width="2" height="12"/><rect x="2761" y="160" width="2" height="38"/><rect x="2787" y="160" width="2" height="12"/><rect x="2813" y="160" width="2" height="12"/><rect x="2839" y="160" width="2" height="12"/><rect x="2865" y="160" width="2" height="12"/><rect x="2891" y="160" width="2" height="12"/><rect x="2917" y="160" width="2" height="12"/><rect x="2943" y="160" width="2" height="12"/><rect x="2969" y="160" width="2" height="12"/><rect x="2995" y="160" width="2" height="12"/><rect x="3021" y="160" width="2" height="38"/><rect x="3047" y="160" width="2" height="12"/><rect x="3073" y="160" width="2" height="12"/><rect x="1842" y="221" width="13" height="2"/><rect x="1842" y="247" width="13" height="2"/><rect x="1842" y="273" width="13" height="2"/><rect x="1842" y="299" width="39" height="2"/><rect x="1842" y="325" width="13" height="2"/><rect x="1842" y="351" width="13" height="2"/><rect x="1842" y="377" width="13" height="2"/><rect x="1842" y="403" width="13" height="2"/><rect x="1842" y="429" width="13" height="2"/><rect x="1842" y="455" width="13" height="2"/><rect x="1842" y="481" width="13" height="2"/><rect x="1842" y="507" width="13" height="2"/><rect x="1842" y="533" width="13" height="2"/><rect x="1842" y="559" width="39" height="2"/><rect x="1842" y="585" width="13" height="2"/><rect x="1842" y="611" width="13" height="2"/><rect x="1842" y="637" width="13" height="2"/><rect x="1842" y="663" width="13" height="2"/><rect x="1842" y="689" width="13" height="2"/><rect x="1842" y="715" width="13" height="2"/><rect x="1842" y="741" width="13" height="2"/><rect x="1842" y="767" width="13" height="2"/><rect x="1842" y="793" width="13" height="2"/><rect x="1842" y="819" width="39" height="2"/><rect x="1842" y="845" width="13" height="2"/><rect x="1842" y="871" width="13" height="2"/><rect x="1842" y="897" width="13" height="2"/><rect x="1842" y="923" width="13" height="2"/><rect x="1842" y="949" width="13" height="2"/><rect x="1842" y="975" width="13" height="2"/><rect x="1842" y="1001" width="13" height="2"/><rect x="1842" y="1027" width="13" height="2"/><rect x="1842" y="1053" width="13" height="2"/><rect x="1842" y="1079" width="39" height="2"/><rect x="1842" y="1105" width="13" height="2"/><rect x="1842" y="1131" width="13" height="2"/><rect x="1842" y="1157" width="13" height="2"/><rect x="1842" y="1183" width="13" height="2"/><rect x="1842" y="1209" width="13" height="2"/><rect x="1842" y="1235" width="13" height="2"/></g>
</svg>
<div class="a rl" style="left:1986px;top:181px">0</div><div class="a rl" style="left:2246px;top:181px">100</div><div class="a rl" style="left:2506px;top:181px">200</div><div class="a rl" style="left:2766px;top:181px">300</div><div class="a rl" style="left:3026px;top:181px">400</div>
<div class="a rl rot" style="left:1862px;top:295px">0</div><div class="a rl rot" style="left:1862px;top:555px">100</div><div class="a rl rot" style="left:1862px;top:815px">200</div><div class="a rl rot" style="left:1862px;top:1075px">300</div>

<!-- canvas -->
<div class="a" style="left:1881px;top:200px;width:1203px;height:1049px;background:#f2f2f2"></div>
<!-- device -->

<!-- dashed guides -->
<svg class="a" style="left:1882px;top:200px" width="1202" height="1049" viewBox="1882 200 1202 1049">
 <g stroke="#b5b5b5" stroke-width="2" stroke-dasharray="10 6">
  <path d="M1941 298 H3051"/>
  <path d="M1980 259 V1249"/>
 </g>
 <path d="M3010.6 259 V1249" stroke="#bcbcbc" stroke-width="1.3" stroke-dasharray="10 6"/>
</svg>
<div class="a" style="left:1982px;top:300px;width:1028px;height:949px;background:#fafafa"></div>
<div class="a" style="left:1982px;top:300px;width:1028px;height:66px;background:#303f9f"></div>
<div class="a" style="left:1982px;top:366px;width:1028px;height:149px;background:#3f51b5;box-shadow:0 1px 3px rgba(0,0,0,0.25)"></div>
<svg class="a" style="left:2800px;top:305px" width="110" height="56" viewBox="2800 305 110 56">
 <path d="M2805.7 321 Q2832.3 303 2858.8 321 L2832.6 354Z" fill="#fff"/>
 <path d="M2876.1 312 H2891.9 V315.8 H2899.2 V355.6 H2869.5 V315.8 H2876.1Z" fill="#fff"/>
</svg>
<div class="a" style="left:2913px;top:314px;font-size:43px;line-height:44px;color:#fff;white-space:nowrap">7:00</div>
<div class="a" style="left:2026px;top:411.5px;font-size:54.5px;line-height:60px;color:#fff;white-space:nowrap;-webkit-text-stroke:0.9px #fff">Android Studio</div>
<div class="a scr" id="s1" style="left:2025px;top:563px;transform:scaleX(0.9552)">Cupcake ipsum dolor sit. Amet chupa chups tiramisu dessert.</div>
<div class="a scr" id="s2" style="left:2025px;top:607.5px;transform:scaleX(0.9517)">Marshmallow jelly bonbon dessert halvah pastry candy canes dragée.</div>
<div class="a scr" id="s3" style="left:2025px;top:653px;transform:scaleX(0.9555)">Jujubes liquorice sesame snaps halvah toffee toffee dessert</div>
<div class="a bt" id="b1" style="left:2024px;top:830px;transform:scaleX(0.88)">Cupcake ipsum dolor sit. Amet chupa chups tiramisu</div>
<div class="a bt" id="b2" style="left:2024px;top:881px;transform:scaleX(0.901)">dessert. Marshmallow jelly bonbon dessert halvah pastry</div>
<div class="a bt" id="b3" style="left:2024px;top:932px;transform:scaleX(0.8807)">candy canes dragée. Jujubes liquorice sesame snaps</div>
<div class="a bt" id="b4" style="left:2024px;top:984px;transform:scaleX(0.9686)">halvah toffee toffee dessert</div>

</body></html>
